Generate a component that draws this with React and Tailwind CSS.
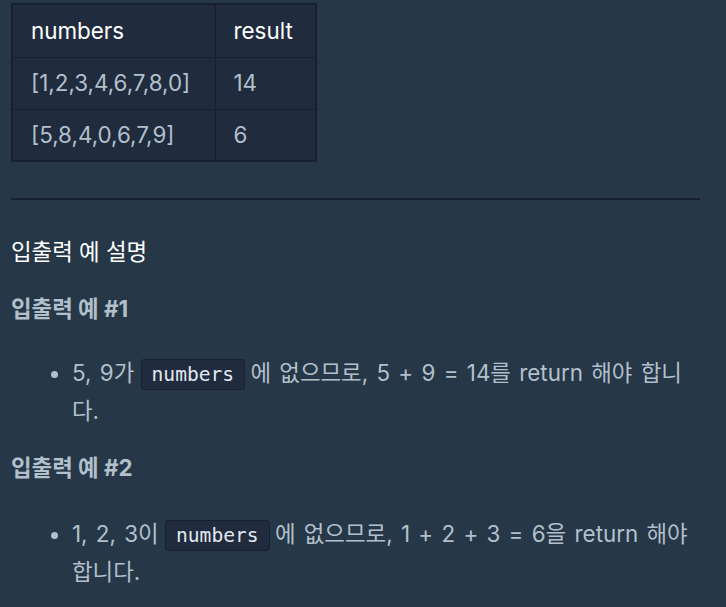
const rows = [
  ["[1,2,3,4,6,7,8,0]", "14"],
  ["[5,8,4,0,6,7,9]", "6"],
]

const Code = ({ children }) => (
  <code className="ml-[-2px] mr-[-3px] rounded-[4px] border border-[#172032] bg-[#202b3d] px-[10px] py-[3px] font-['DejaVu_Sans_Mono',monospace] text-[19.6px] text-[#e2e8f0] [word-spacing:0]">
    {children}
  </code>
)

export default function App() {
  return (
    <div className="min-h-[607px] bg-[#263747] font-['Inter','Noto_Sans_CJK_KR',sans-serif] text-[22.4px] leading-[1.7] text-[#b2c0cc]">
      <div className="w-[700px] pl-[11px] pt-[3px]">
        <table className="border-collapse border-2 border-[#172032] bg-[#202b3d]">
          <thead>
            <tr>
              <th className="h-[53px] w-[203px] border border-[#172032] px-[18px] text-left font-normal text-white">numbers</th>
              <th className="h-[53px] w-[101px] border border-[#172032] px-[18px] text-left font-normal text-white">result</th>
            </tr>
          </thead>
          <tbody>
            {rows.map(r => (
              <tr key={r[0]}>
                <td className="h-[52px] border border-[#172032] px-[18px]">{r[0]}</td>
                <td className="h-[52px] border border-[#172032] px-[18px]">{r[1]}</td>
              </tr>
            ))}
          </tbody>
        </table>

        <hr className="mt-[36px] border-t-[2px] border-[#172032]" />

        <h5 className="mt-[33px] text-white">입출력 예 설명</h5>

        <h6 className="mt-[19px] font-bold">입출력 예 #1</h6>
        <ul className="mt-[26px] list-disc pl-[61px] [word-spacing:2px]">
          <li>
            5, 9가 <Code>numbers</Code> 에 없으므로, 5 + 9 = 14를 return 해야 합니다.
          </li>
        </ul>

        <h6 className="mt-[19px] font-bold">입출력 예 #2</h6>
        <ul className="mt-[28px] list-disc pl-[61px] [word-spacing:2px]">
          <li>
            1, 2, 3이 <Code>numbers</Code> 에 없으므로, 1 + 2 + 3 = 6을 return 해야 합니다.
          </li>
        </ul>
      </div>
    </div>
  )
}
